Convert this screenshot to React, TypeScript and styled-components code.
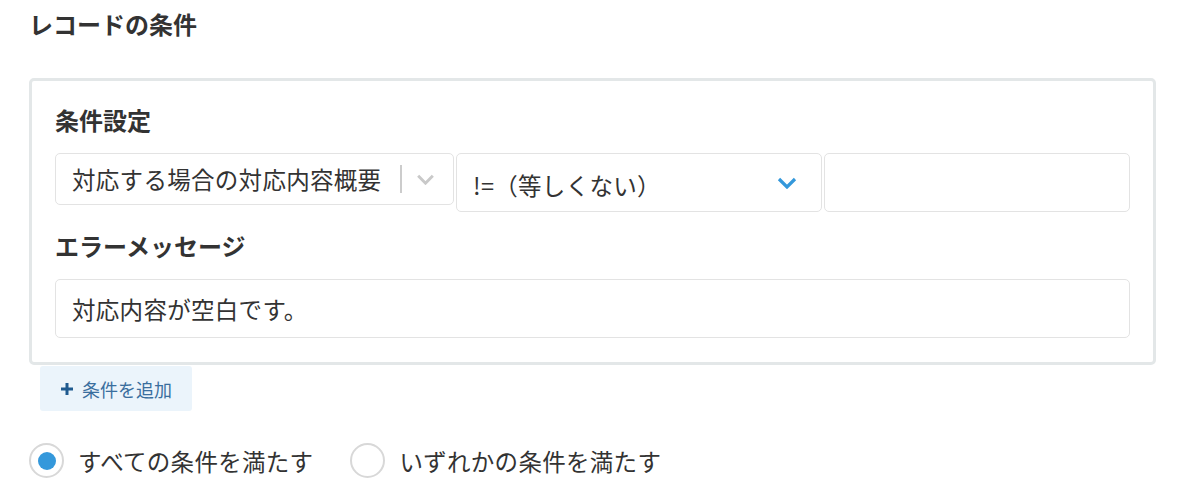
import React, { useState } from 'react';
import styled, { createGlobalStyle } from 'styled-components';

const GlobalStyle = createGlobalStyle`
  body {
    margin: 0;
    background: #fff;
    font-family: 'Noto Sans CJK JP', 'Noto Sans', sans-serif;
    color: #333;
  }
`;

const Page = styled.div`
  padding: 9px 33px 0 29px;
`;

const Title = styled.h2`
  margin: 0;
  font-size: 24px;
  font-weight: 700;
  line-height: 30px;
`;

const Card = styled.div`
  margin-top: 39px;
  border: 3px solid #e3e7e8;
  border-radius: 5px;
  padding: 24px 23px 24px 23px;
`;

const Label = styled.div`
  font-size: 24px;
  font-weight: 700;
  line-height: 30px;
  margin-bottom: 18px;
`;

const Row = styled.div`
  display: flex;
  align-items: flex-start;
  gap: 2px;
  margin-bottom: 19px;
`;

const Box = styled.div<{ $w?: number; $h: number }>`
  box-sizing: border-box;
  ${p => (p.$w ? `width: ${p.$w}px; flex: none;` : 'flex: 1;')}
  height: ${p => p.$h}px;
  border: 1px solid #e3e3e3;
  border-radius: 5px;
  background: #fff;
  display: flex;
  align-items: center;
  padding: 0 16px;
  font-size: 23.5px;
  color: #333;
`;

const BoxText = styled.span<{ $shift?: number }>`
  flex: 1;
  white-space: nowrap;
  letter-spacing: 0.3px;
  padding-top: ${p => p.$shift || 0}px;
`;

const Separator = styled.span`
  width: 2px;
  height: 28px;
  background: #cccccc;
  margin: 0 14px 0 8px;
`;

const Chevron = styled.svg`
  flex: none;
`;

const Spacer = styled.span<{ $w: number }>`
  width: ${p => p.$w}px;
  flex: none;
`;

const AddButton = styled.button`
  margin: 1px 0 0 11px;
  width: 152px;
  height: 45px;
  border: none;
  border-radius: 3px;
  background: #ebf4fb;
  color: #3a6e9e;
  font-family: inherit;
  font-size: 18px;
  display: flex;
  align-items: center;
  padding: 0 0 0 20px;
  gap: 8px;
  cursor: pointer;
`;

const RadioGroup = styled.div`
  display: flex;
  align-items: center;
  gap: 37px;
  margin-top: 32px;
`;

const RadioItem = styled.label`
  display: flex;
  align-items: center;
  gap: 14px;
  font-size: 23.5px;
  color: #333;
  cursor: pointer;
  letter-spacing: 0.3px;
`;

const RadioCircle = styled.span<{ $on: boolean }>`
  box-sizing: border-box;
  width: 35px;
  height: 35px;
  border-radius: 50%;
  border: 2px solid #d8d8d8;
  display: flex;
  align-items: center;
  justify-content: center;
  &::after {
    content: '';
    width: 18px;
    height: 18px;
    border-radius: 50%;
    background: ${p => (p.$on ? '#3498db' : 'transparent')};
  }
`;

const ChevronDown = ({ color, w = 20, h = 12 }: { color: string; w?: number; h?: number }) => (
  <Chevron width={w} height={h} viewBox="0 0 20 12">
    <path d="M2 2 L10 10 L18 2" fill="none" stroke={color} strokeWidth="3.2" />
  </Chevron>
);

const App = () => {
  const [mode, setMode] = useState('all');
  return (
    <Page>
      <GlobalStyle />
      <Title>レコードの条件</Title>
      <Card>
        <Label>条件設定</Label>
        <Row>
          <Box $w={399} $h={52}>
            <BoxText>対応する場合の対応内容概要</BoxText>
            <Separator />
            <ChevronDown color="#c9c9c9" w={19} h={11} />
            <Spacer $w={2} />
          </Box>
          <Box $w={366} $h={59}>
            <BoxText $shift={4}>!=（等しくない）</BoxText>
            <ChevronDown color="#3498db" />
            <Spacer $w={8} />
          </Box>
          <Box $h={59} />
        </Row>
        <Label>エラーメッセージ</Label>
        <Box $h={59}>
          <BoxText>対応内容が空白です。</BoxText>
        </Box>
      </Card>
      <AddButton>
        <svg width="14" height="14" viewBox="0 0 14 14">
          <path d="M7 1 V13 M1 7 H13" stroke="#1f5a8f" strokeWidth="3" />
        </svg>
        条件を追加
      </AddButton>
      <RadioGroup>
        <RadioItem onClick={() => setMode('all')}>
          <RadioCircle $on={mode === 'all'} />
          すべての条件を満たす
        </RadioItem>
        <RadioItem onClick={() => setMode('any')}>
          <RadioCircle $on={mode === 'any'} />
          いずれかの条件を満たす
        </RadioItem>
      </RadioGroup>
    </Page>
  );
};

export default App;
